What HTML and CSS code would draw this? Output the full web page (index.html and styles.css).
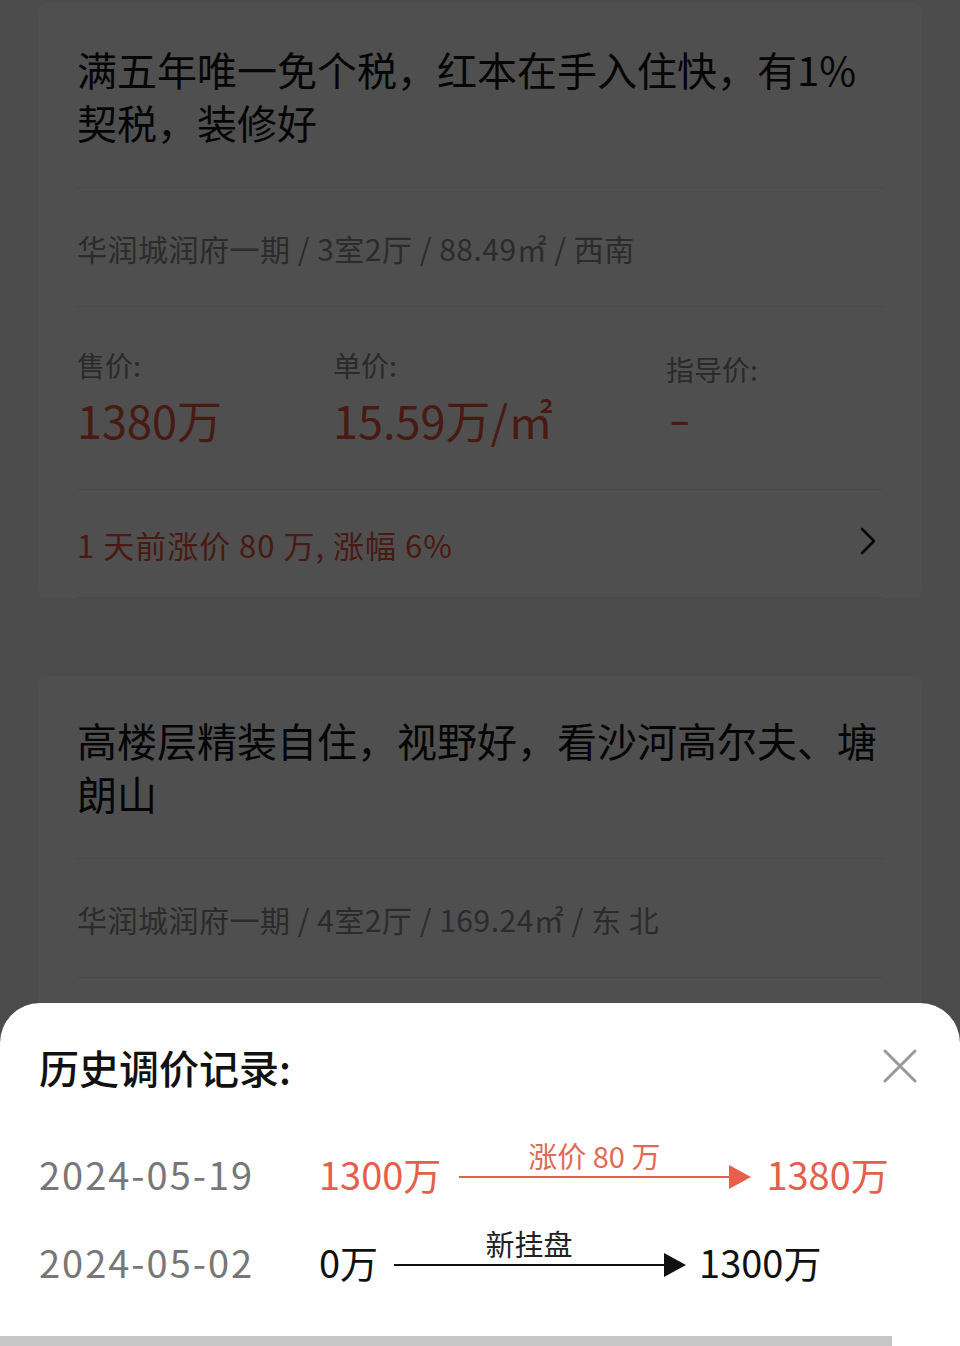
FILE: index.html
```html
<!DOCTYPE html>
<html lang="zh-CN">
<head>
<meta charset="utf-8">
<title>历史调价记录</title>
<link rel="stylesheet" href="styles.css">
</head>
<body>
<div class="page">
  <div class="list">
    <section class="card">
      <h2 class="title">满五年唯一免个税，红本在手入住快，有1%<br>契税，装修好</h2>
      <div class="meta">华润城润府一期 / 3室2厅 / 88.49㎡ / 西南</div>
      <div class="prices">
        <div class="price-col">
          <div class="label">售价:</div>
          <div class="value">1380万</div>
        </div>
        <div class="price-col">
          <div class="label">单价:</div>
          <div class="value">15.59万/㎡</div>
        </div>
        <div class="price-col guide">
          <div class="label">指导价:</div>
          <div class="value">-</div>
        </div>
      </div>
      <div class="change">
        <span class="change-text">1 天前涨价 80 万, 涨幅 6%</span>
        <svg class="chev" width="18" height="28" viewBox="0 0 18 28"><path d="M3 2 L15 14 L3 26" fill="none" stroke="#111" stroke-width="2.6" stroke-linecap="round" stroke-linejoin="round"/></svg>
      </div>
    </section>

    <section class="card second">
      <h2 class="title">高楼层精装自住，视野好，看沙河高尔夫、塘<br>朗山</h2>
      <div class="meta">华润城润府一期 / 4室2厅 / 169.24㎡ / 东 北</div>
      <div class="card-rest"></div>
    </section>
  </div>

  <div class="mask"></div>

  <div class="sheet">
    <div class="sheet-head">
      <h3 class="sheet-title">历史调价记录:</h3>
      <svg class="close" width="34" height="34" viewBox="0 0 34 34"><path d="M2 2 L32 32 M32 2 L2 32" stroke="#9a9a9a" stroke-width="3" stroke-linecap="round"/></svg>
    </div>
    <div class="record up">
      <span class="date">2024-05-19</span>
      <span class="amt">1300万</span>
      <span class="arrow">
        <span class="arrow-label">涨价 80 万</span>
        <svg width="292" height="24" viewBox="0 0 292 24"><line x1="0" y1="12" x2="272" y2="12" stroke="#e8604b" stroke-width="2"/><polygon points="270,0 292,12 270,24" fill="#e8604b"/></svg>
      </span>
      <span class="amt">1380万</span>
    </div>
    <div class="record">
      <span class="date">2024-05-02</span>
      <span class="amt">0万</span>
      <span class="arrow">
        <span class="arrow-label">新挂盘</span>
        <svg width="292" height="24" viewBox="0 0 292 24"><line x1="0" y1="12" x2="272" y2="12" stroke="#111" stroke-width="2"/><polygon points="270,0 292,12 270,24" fill="#111"/></svg>
      </span>
      <span class="amt">1300万</span>
    </div>
    <div class="scrollbar"></div>
  </div>
</div>
</body>
</html>
```

FILE: styles.css
```css
* { box-sizing: border-box; }
html, body { margin: 0; padding: 0; }
body {
  font-family: "Noto Sans CJK SC", "Noto Sans", sans-serif;
  background: #f3f3f3;
  color: #111;
}
.page {
  position: relative;
  height: 1346px;
  overflow: hidden;
}
.list {
  padding: 3px 38px 0;
}
.card {
  background: #fff;
  border-radius: 8px;
  padding: 40px 39px 0;
}
.card.second {
  margin-top: 78px;
  padding-top: 38px;
}
.card-rest {
  border-top: 1px solid #ebebeb;
  height: 200px;
}
.title {
  margin: 0;
  font-size: 40px;
  line-height: 53px;
  font-weight: 400;
  color: #111;
  padding-bottom: 38px;
}
.meta {
  border-top: 1px solid #ebebeb;
  padding: 40px 0 38px;
  font-size: 30px;
  line-height: 40px;
  letter-spacing: 0.5px;
  color: #8c8c8c;
}
.prices {
  border-top: 1px solid #ebebeb;
  display: grid;
  grid-template-columns: 256px 333px 1fr;
  padding: 38px 0 41px;
}
.label {
  font-size: 28px;
  line-height: 40px;
  color: #888;
}
.guide .label { margin-top: 4px; }
.value {
  margin-top: 7px;
  font-size: 45px;
  line-height: 56px;
  color: #e8553f;
}
.guide .value {
  margin-top: 0;
  padding-left: 2px;
  transform: scaleX(1.4);
  transform-origin: left center;
}
.change {
  border-top: 1px solid #ebebeb;
  border-bottom: 1px solid #ebebeb;
  height: 109px;
  display: flex;
  align-items: center;
  justify-content: space-between;
  padding-right: 6px;
}
.change-text {
  font-size: 31px;
  letter-spacing: 1px;
  color: #e8553f;
  margin-top: 2px;
}
.chev { margin-top: -6px; }
.mask {
  position: absolute;
  inset: 0;
  background: rgba(0, 0, 0, 0.69);
}
.sheet {
  position: absolute;
  left: 0;
  right: 0;
  bottom: 0;
  height: 343px;
  background: #fff;
  border-radius: 40px 40px 0 0;
  padding: 40px 0 0 39px;
}
.sheet-head {
  display: flex;
  justify-content: space-between;
  align-items: center;
  height: 50px;
  padding-right: 43px;
}
.sheet-title {
  margin: 0;
  font-size: 40px;
  line-height: 50px;
  font-weight: 500;
  color: #111;
  margin-top: -3px;
}
.close { margin-top: -4px; }
.record {
  display: flex;
  align-items: center;
  height: 88px;
}
.record.up { margin-top: 36px; }
.date {
  width: 280px;
  flex: none;
  font-size: 38px;
  letter-spacing: 2px;
  color: #777;
}
.amt {
  font-size: 38px;
  color: #111;
}
.up .amt { color: #e4604c; }
.arrow {
  display: flex;
  flex-direction: column;
  margin: 0 15px 0 18px;
  padding-bottom: 18px;
}
.record:not(.up) .arrow { margin-left: 16px; margin-right: 13px; }
.arrow-label {
  width: 270px;
  text-align: center;
  font-size: 29px;
  line-height: 32px;
  margin-bottom: -6px;
  color: #222;
}
.up .arrow-label { color: #e06a55; }
.arrow svg { display: block; }
.scrollbar {
  position: absolute;
  left: 0;
  bottom: 0;
  width: 892px;
  height: 10px;
  background: #c6c6c6;
}
```
